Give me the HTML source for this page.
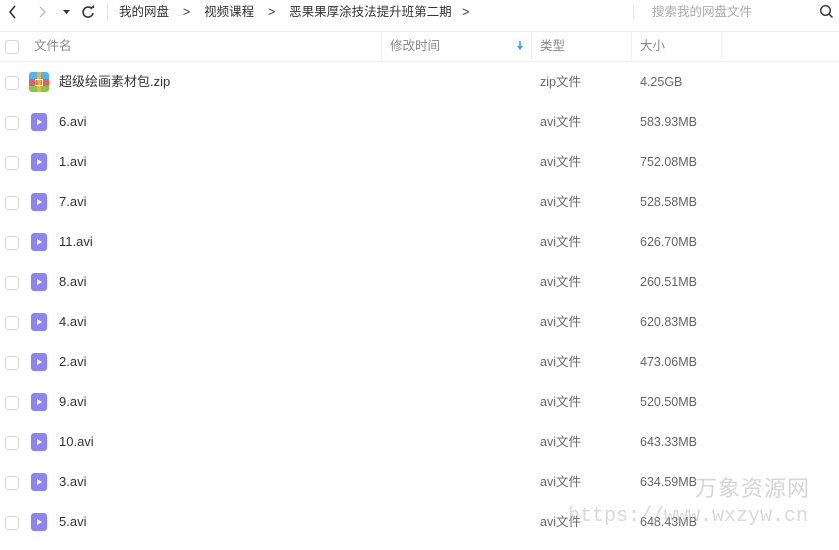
<!DOCTYPE html><html><head><meta charset="utf-8"><style>
body{margin:0;width:839px;height:550px;overflow:hidden;background:#fff;font-family:"Liberation Sans","Noto Sans CJK SC",sans-serif;font-size:12.5px;color:#424e67;position:relative}
.a{position:absolute;white-space:nowrap;line-height:16px;height:16px}
.cb{position:absolute;left:5px;width:12px;height:12px;border:1px solid #d4d7de;border-radius:3px;background:#fff}
.nm{left:59px;color:#333;font-size:13px}
.tp{left:540px;color:#666}
.sz{left:640px;color:#666}
.ic{position:absolute;left:31px;width:16px;height:18px;background:#8b84f5;border-radius:3px}
.ic:after{content:"";position:absolute;left:6px;top:5.5px;border-left:5px solid #fff;border-top:3.5px solid transparent;border-bottom:3.5px solid transparent}
</style></head><body>
<svg class="a" style="left:0;top:0;height:24px" width="110" height="24">
<path d="M15 6 L10 12 L15 18" stroke="#333" stroke-width="1.6" fill="none"/>
<path d="M40 7 L45 12 L40 17" stroke="#bbb" stroke-width="1.3" fill="none"/>
<path d="M63 10 L70 10 L66.5 14Z" fill="#333"/>
<path d="M92 9 A5 5 0 1 0 93 13" stroke="#333" stroke-width="1.6" fill="none"/><path d="M90 8 L94 8 L94 5Z" fill="#333"/>
<line x1="107.5" y1="4" x2="107.5" y2="21" stroke="#e3e3e3"/>
</svg>
<div class="a" style="left:119px;top:4px;font-size:12.5px;color:#333">我的网盘&nbsp;&nbsp;&nbsp;&nbsp;&gt;&nbsp;&nbsp;&nbsp;&nbsp;视频课程&nbsp;&nbsp;&nbsp;&nbsp;&gt;&nbsp;&nbsp;&nbsp;&nbsp;恶果果厚涂技法提升班第二期&nbsp;&nbsp;&nbsp;&gt;</div>
<div class="a" style="left:633px;top:5px;width:1px;height:15px;background:#e6e6e6"></div>
<div class="a" style="left:652px;top:4px;color:#aaa">搜索我的网盘文件</div>
<svg class="a" style="left:819px;top:4px" width="16" height="16"><circle cx="6.5" cy="6.5" r="4.8" stroke="#333" stroke-width="1.4" fill="none"/><line x1="10" y1="10" x2="13.5" y2="13.5" stroke="#333" stroke-width="1.5"/></svg>
<div class="a" style="left:0;top:31px;width:839px;height:1px;background:#f0f0f0"></div>
<div class="a" style="left:0;top:61px;width:839px;height:1px;background:#f0f0f0"></div>
<div class="a" style="left:381px;top:32px;width:1px;height:29px;background:#f0f0f0"></div>
<div class="a" style="left:531px;top:32px;width:1px;height:29px;background:#f0f0f0"></div>
<div class="a" style="left:631px;top:32px;width:1px;height:29px;background:#f0f0f0"></div>
<div class="a" style="left:721px;top:32px;width:1px;height:29px;background:#f0f0f0"></div>
<div class="cb" style="top:40px"></div>
<div class="a" style="left:34px;top:38px;color:#888">文件名</div>
<div class="a" style="left:390px;top:38px;color:#888">修改时间</div>
<svg class="a" style="left:516px;top:40px" width="8" height="12"><line x1="4" y1="1" x2="4" y2="9" stroke="#3b9cf5" stroke-width="1.6"/><path d="M1 6 L4 10 L7 6Z" fill="#3b9cf5"/></svg>
<div class="a" style="left:540px;top:38px;color:#888">类型</div>
<div class="a" style="left:640px;top:38px;color:#888">大小</div>

<div class="cb" style="top:76px"></div>
<div class="a" style="left:29px;top:72px;width:20px;height:20px;border-radius:3px;overflow:hidden">
<div style="height:7px;background:#4cb6f2"></div><div style="height:7px;background:#f25a5a"></div><div style="height:6px;background:#7dcb4a"></div>
<div style="position:absolute;left:8px;top:0;width:4px;height:20px;background:#f6b13c"></div>
<div style="position:absolute;left:6px;top:7px;width:6px;height:5px;border:1px solid #fff"></div></div>
<div class="a nm" style="top:74px">超级绘画素材包.zip</div>
<div class="a tp" style="top:74px">zip文件</div>
<div class="a sz" style="top:74px">4.25GB</div>

<div class="cb" style="top:116px"></div><div class="ic" style="top:113px"></div><div class="a nm" style="top:114px">6.avi</div><div class="a tp" style="top:114px">avi文件</div><div class="a sz" style="top:114px">583.93MB</div>
<div class="cb" style="top:156px"></div><div class="ic" style="top:153px"></div><div class="a nm" style="top:154px">1.avi</div><div class="a tp" style="top:154px">avi文件</div><div class="a sz" style="top:154px">752.08MB</div>
<div class="cb" style="top:196px"></div><div class="ic" style="top:193px"></div><div class="a nm" style="top:194px">7.avi</div><div class="a tp" style="top:194px">avi文件</div><div class="a sz" style="top:194px">528.58MB</div>
<div class="cb" style="top:236px"></div><div class="ic" style="top:233px"></div><div class="a nm" style="top:234px">11.avi</div><div class="a tp" style="top:234px">avi文件</div><div class="a sz" style="top:234px">626.70MB</div>
<div class="cb" style="top:276px"></div><div class="ic" style="top:273px"></div><div class="a nm" style="top:274px">8.avi</div><div class="a tp" style="top:274px">avi文件</div><div class="a sz" style="top:274px">260.51MB</div>
<div class="cb" style="top:316px"></div><div class="ic" style="top:313px"></div><div class="a nm" style="top:314px">4.avi</div><div class="a tp" style="top:314px">avi文件</div><div class="a sz" style="top:314px">620.83MB</div>
<div class="cb" style="top:356px"></div><div class="ic" style="top:353px"></div><div class="a nm" style="top:354px">2.avi</div><div class="a tp" style="top:354px">avi文件</div><div class="a sz" style="top:354px">473.06MB</div>
<div class="cb" style="top:396px"></div><div class="ic" style="top:393px"></div><div class="a nm" style="top:394px">9.avi</div><div class="a tp" style="top:394px">avi文件</div><div class="a sz" style="top:394px">520.50MB</div>
<div class="cb" style="top:436px"></div><div class="ic" style="top:433px"></div><div class="a nm" style="top:434px">10.avi</div><div class="a tp" style="top:434px">avi文件</div><div class="a sz" style="top:434px">643.33MB</div>
<div class="cb" style="top:476px"></div><div class="ic" style="top:473px"></div><div class="a nm" style="top:474px">3.avi</div><div class="a tp" style="top:474px">avi文件</div><div class="a sz" style="top:474px">634.59MB</div>
<div class="cb" style="top:516px"></div><div class="ic" style="top:513px"></div><div class="a nm" style="top:514px">5.avi</div><div class="a tp" style="top:514px">avi文件</div><div class="a sz" style="top:514px">648.43MB</div>

<div class="a" style="left:695px;top:476px;font-size:22px;line-height:26px;height:26px;color:rgba(180,180,180,.55);letter-spacing:1px">万象资源网</div>
<div class="a" style="left:568px;top:505px;font-family:'Liberation Mono',monospace;font-size:20px;line-height:24px;height:24px;color:rgba(180,180,180,.5)">https://www.wxzyw.cn</div>
</body></html>
